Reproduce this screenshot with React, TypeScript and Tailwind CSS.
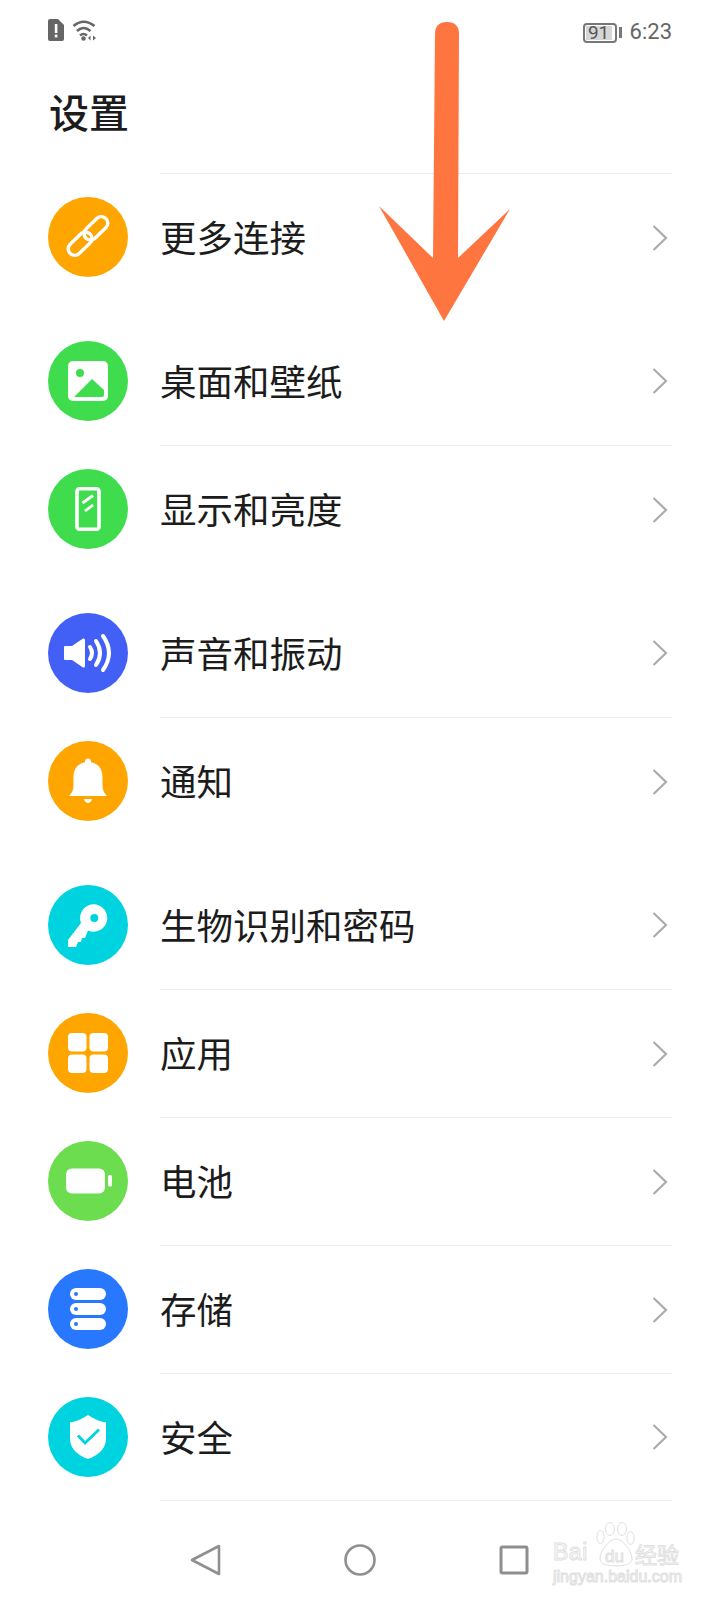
import React from 'react';

const LinkIcon = () => (
  <svg viewBox="0 0 80 80" className="w-20 h-20" fill="none" stroke="white" strokeWidth="3.4">
    <g transform="rotate(46 40 39)">
      <rect x="33.5" y="14" width="13" height="28" rx="6.5" />
      <rect x="33.5" y="36" width="13" height="28" rx="6.5" />
    </g>
  </svg>
);

const ImageIcon = () => (
  <svg viewBox="0 0 80 80" className="w-20 h-20">
    <rect x="20" y="20" width="40" height="40" rx="5" fill="white" />
    <circle cx="32" cy="32" r="4" fill="#3fdd4e" />
    <path d="M26 56 L44 38 L56 49 L56 54 Q56 56 54 56 Z" fill="#3fdd4e" />
  </svg>
);

const PhoneIcon = () => (
  <svg viewBox="0 0 80 80" className="w-20 h-20" fill="none" stroke="white">
    <rect x="29" y="19.8" width="22" height="40.4" rx="2.5" strokeWidth="3.6" />
    <path d="M34.5 34 L45 26.5 M37 42 L45 36" strokeWidth="2.8" />
  </svg>
);

const SoundIcon = () => (
  <svg viewBox="0 0 80 80" className="w-20 h-20">
    <path d="M16 34 Q16 33 17 33 L24 33 L35 25.5 Q37 25 37 27 L37 53 Q37 55 35 54.5 L24 47 L17 47 Q16 47 16 46 Z" fill="white" />
    <g fill="none" stroke="white" strokeWidth="4" strokeLinecap="round">
      <path d="M42 34 Q46 40 42 46" />
      <path d="M48 28 Q56 40 48 52" />
      <path d="M55 23 Q67 40 55 57" />
    </g>
  </svg>
);

const BellIcon = () => (
  <svg viewBox="0 0 80 80" className="w-20 h-20" fill="white">
    <circle cx="40" cy="20.5" r="3" />
    <path d="M40 21 C30 21 25.5 28 25.5 36 L25.5 44 C25.5 49 24 52 21 55 L59 55 C56 52 54.5 49 54.5 44 L54.5 36 C54.5 28 50 21 40 21 Z" />
    <path d="M36 58 L44 58 Q43 62 40 62 Q37 62 36 58 Z" />
  </svg>
);

const KeyIcon = () => (
  <svg viewBox="0 0 80 80" className="w-20 h-20">
    <path
      fillRule="evenodd"
      fill="white"
      d="M46.3 19.3 A13.7 13.7 0 1 1 40 45.5 L37 53 L34 53 L33 57 L30 57 L28 62 L20 62 L20 55 L33 38 A13.7 13.7 0 0 1 46.3 19.3 Z M46.3 29 A4 4 0 1 0 46.3 37 A4 4 0 1 0 46.3 29 Z"
    />
  </svg>
);

const GridIcon = () => (
  <svg viewBox="0 0 80 80" className="w-20 h-20" fill="white">
    <rect x="20" y="20" width="18.5" height="18.5" rx="4" />
    <rect x="41.5" y="20" width="18.5" height="18.5" rx="4" />
    <rect x="20" y="41.5" width="18.5" height="18.5" rx="4" />
    <rect x="41.5" y="41.5" width="18.5" height="18.5" rx="4" />
  </svg>
);

const BatteryIcon = () => (
  <svg viewBox="0 0 80 80" className="w-20 h-20" fill="white">
    <rect x="18" y="27.5" width="39" height="25" rx="6" />
    <rect x="60" y="34" width="4" height="11.5" rx="1.5" />
  </svg>
);

const StorageIcon = () => (
  <svg viewBox="0 0 80 80" className="w-20 h-20">
    {[19, 34, 49].map((y) => (
      <g key={y}>
        <rect x="22" y={y} width="36" height="12" rx="6" fill="white" />
        <circle cx="28" cy={y + 6} r="2" fill="#2878ff" />
      </g>
    ))}
  </svg>
);

const ShieldIcon = () => (
  <svg viewBox="0 0 80 80" className="w-20 h-20">
    <path d="M40 18 C46 22 52 24.5 58 25.5 L58 42 C58 52 49 59 40 62 C31 59 22 52 22 42 L22 25.5 C28 24.5 34 22 40 18 Z" fill="white" />
    <path d="M30 38.5 L37 46 L51 32.5" fill="none" stroke="#00d3e0" strokeWidth="2.8" />
  </svg>
);

const Chevron = () => (
  <svg viewBox="0 0 16 26" className="w-4 h-[26px] shrink-0 mr-[4px]" fill="none" stroke="#ababab" strokeWidth="2.2">
    <path d="M1.5 1 L14 13 L1.5 25" />
  </svg>
);

const groups = [
  [{ label: '更多连接', color: 'bg-[#ffa500]', icon: <LinkIcon /> }],
  [
    { label: '桌面和壁纸', color: 'bg-[#3fdd4e]', icon: <ImageIcon /> },
    { label: '显示和亮度', color: 'bg-[#3fdd4e]', icon: <PhoneIcon /> },
  ],
  [
    { label: '声音和振动', color: 'bg-[#4360f6]', icon: <SoundIcon /> },
    { label: '通知', color: 'bg-[#ffa500]', icon: <BellIcon /> },
  ],
  [
    { label: '生物识别和密码', color: 'bg-[#00d3e0]', icon: <KeyIcon /> },
    { label: '应用', color: 'bg-[#ffa500]', icon: <GridIcon /> },
    { label: '电池', color: 'bg-[#6bdd4f]', icon: <BatteryIcon /> },
    { label: '存储', color: 'bg-[#2878ff]', icon: <StorageIcon /> },
    { label: '安全', color: 'bg-[#00d3e0]', icon: <ShieldIcon /> },
  ],
];

export default function App() {
  return (
    <div className="relative w-[720px] h-[1600px] overflow-hidden bg-white font-['Roboto','Noto_Sans_CJK_SC',sans-serif]">
      {/* Status bar */}
      <div className="h-[60px] pl-12 pr-12 pt-[19px] flex justify-between items-start text-[#666]">
        <div className="flex items-start gap-2">
          <svg viewBox="0 0 16 22" className="w-4 h-[22px]">
            <path d="M2 0 L10 0 L16 6 L16 20 Q16 22 14 22 L2 22 Q0 22 0 20 L0 2 Q0 0 2 0 Z" fill="#666" />
            <rect x="6.8" y="5" width="2.6" height="9" fill="white" />
            <rect x="6.8" y="15.6" width="2.6" height="2.8" fill="white" />
          </svg>
          <svg viewBox="0 0 26 22" className="w-[26px] h-[22px]" fill="none" stroke="#666">
            <path d="M1.5 7 Q11.5 -1.5 22.5 7" strokeWidth="2.6" />
            <path d="M5 12 Q11.5 6 18.5 12" strokeWidth="2.6" />
            <path d="M8 16.5 Q11.5 13.5 15 16.5" strokeWidth="2.4" />
            <circle cx="11.5" cy="19.5" r="2.2" fill="#666" stroke="none" />
            <path d="M18.5 16.5 L18.5 21.5 L16 19 Z M21 16.5 L21 21.5 L24 19 Z" fill="#666" stroke="none" />
          </svg>
        </div>
        <div className="flex items-center">
          <div className="w-[34px] h-[20px] border-2 border-[#777] rounded-[4px] p-[1px] mt-[2px]">
            <div className="w-[26px] h-full bg-[#d6d6d6] flex items-center justify-center text-[19px] leading-none text-[#555]">
              91
            </div>
          </div>
          <div className="w-[3px] h-[11px] bg-[#777] ml-[2px] mt-[2px]" />
          <span className="ml-[8px] text-[22px] leading-[24px] mt-[1px] font-['Roboto',sans-serif]">6:23</span>
        </div>
      </div>

      {/* Title */}
      <div className="h-[113px] pl-[49px] pt-[30px] text-[40px] leading-[50px] font-medium text-[#1c1c1c]">设置</div>

      {/* List */}
      <div className="flex flex-col gap-4">
        {groups.map((group, i) => (
          <div key={i}>
            {group.map((item, j) => (
              <div key={item.label} className="h-[128px] pl-12 pr-12 flex items-center">
                <div className={`w-20 h-20 rounded-full shrink-0 ${item.color}`}>{item.icon}</div>
                <div
                  className={`ml-8 flex-1 h-full flex items-center justify-between border-[#ececec] ${
                    j > 0 || i === 0 ? 'border-t' : ''
                  } ${i === 3 && j === 4 ? 'border-b' : ''}`}
                >
                  <span className="pt-[5px] text-[36.5px] leading-[44px] text-[#1c1c1c]">{item.label}</span>
                  <Chevron />
                </div>
              </div>
            ))}
          </div>
        ))}
      </div>

      {/* Nav bar */}
      <div className="h-[84px] pt-[43px] flex justify-center items-start gap-[123px]">
        <svg viewBox="0 0 32 32" className="w-8 h-8" fill="none" stroke="#8f8f8f" strokeWidth="2.6" strokeLinejoin="round">
          <path d="M3 16 L30 2 L30 30 Z" />
        </svg>
        <svg viewBox="0 0 32 32" className="w-8 h-8" fill="none" stroke="#8f8f8f" strokeWidth="2.6">
          <circle cx="16" cy="16" r="14.5" />
        </svg>
        <svg viewBox="0 0 32 32" className="w-8 h-8" fill="none" stroke="#8f8f8f" strokeWidth="3" strokeLinejoin="round">
          <rect x="2" y="3" width="26" height="26" rx="1.5" />
        </svg>
      </div>

      {/* Annotation arrow */}
      <svg viewBox="0 0 720 340" className="absolute left-0 top-0 w-[720px] h-[340px]">
        <path
          d="M435 34 Q435 22 447 22 Q459 22 459 34 L458 258 L510 209 L444 321 L379 206 L433 258 Z"
          fill="#ff7540"
        />
      </svg>

      {/* Watermark */}
      <div className="absolute left-[553px] top-[1520px] w-[134px] h-[66px] text-white [-webkit-text-stroke:1px_#e0e0e0] font-['Liberation_Sans',sans-serif]">
        <svg viewBox="0 0 40 46" className="absolute left-[43px] top-[2px] w-10 h-[46px]" fill="white" stroke="#e0e0e0" strokeWidth="1">
          <ellipse cx="4.5" cy="15" rx="3.6" ry="6.5" />
          <ellipse cx="14" cy="7" rx="4.5" ry="6.5" />
          <ellipse cx="26" cy="7" rx="4.5" ry="6.5" />
          <ellipse cx="34.5" cy="16" rx="3.6" ry="6.5" />
          <path d="M20 17 C13 17 3 30 4 38 C5 46 35 46 36 38 C37 30 27 17 20 17 Z" />
        </svg>
        <span className="absolute left-0 top-[20px] text-[23px] leading-[24px] tracking-[0.5px]">Bai</span>
        <span className="absolute left-[52px] top-[28px] text-[17px] leading-[18px]">du</span>
        <span className="absolute left-[82px] top-[21px] text-[22px] leading-[24px] font-['Noto_Sans_CJK_SC',sans-serif]">经验</span>
        <span className="absolute left-0 top-[48px] text-[16px] leading-[18px] whitespace-nowrap">jingyan.baidu.com</span>
      </div>
    </div>
  );
}
